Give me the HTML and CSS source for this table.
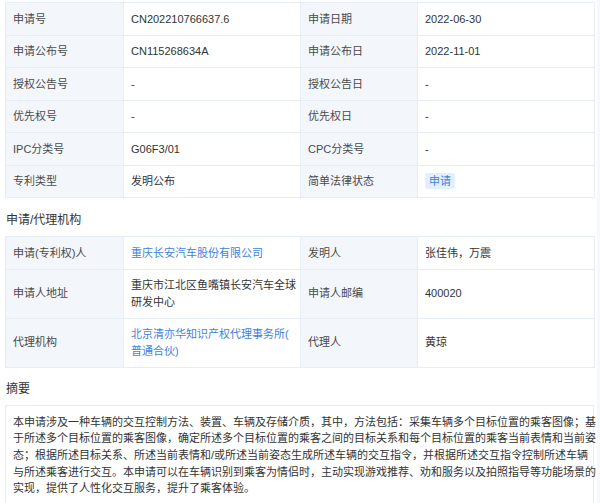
FILE: index.html
```html
<!DOCTYPE html>
<html lang="zh-CN">
<head>
<meta charset="utf-8">
<link rel="stylesheet" href="styles.css">
</head>
<body>
<div class="page">
  <table class="info">
    <colgroup><col class="c-label"><col class="c-value"><col class="c-label2"><col class="c-value"></colgroup>
    <tr><th>申请号</th><td>CN202210766637.6</td><th>申请日期</th><td>2022-06-30</td></tr>
    <tr><th>申请公布号</th><td>CN115268634A</td><th>申请公布日</th><td>2022-11-01</td></tr>
    <tr><th>授权公告号</th><td>-</td><th>授权公告日</th><td>-</td></tr>
    <tr><th>优先权号</th><td>-</td><th>优先权日</th><td>-</td></tr>
    <tr><th>IPC分类号</th><td>G06F3/01</td><th>CPC分类号</th><td>-</td></tr>
    <tr><th>专利类型</th><td>发明公布</td><th>简单法律状态</th><td><span class="tag">申请</span></td></tr>
  </table>

  <h3 class="section-title">申请/代理机构</h3>
  <table class="info">
    <colgroup><col class="c-label"><col class="c-value"><col class="c-label2"><col class="c-value"></colgroup>
    <tr><th>申请(专利权)人</th><td><a class="link">重庆长安汽车股份有限公司</a></td><th>发明人</th><td>张佳伟，万震</td></tr>
    <tr><th>申请人地址</th><td>重庆市江北区鱼嘴镇长安汽车全球研发中心</td><th>申请人邮编</th><td>400020</td></tr>
    <tr><th>代理机构</th><td><a class="link">北京清亦华知识产权代理事务所(<br>普通合伙)</a></td><th>代理人</th><td>黄琼</td></tr>
  </table>

  <h3 class="section-title abs-title">摘要</h3>
  <div class="abstract">本申请涉及一种车辆的交互控制方法、装置、车辆及存储介质，其中，方法包括：采集车辆多个目标位置的乘客图像；基<br>于所述多个目标位置的乘客图像，确定所述多个目标位置的乘客之间的目标关系和每个目标位置的乘客当前表情和当前姿<br>态；根据所述目标关系、所述当前表情和/或所述当前姿态生成所述车辆的交互指令，并根据所述交互指令控制所述车辆<br>与所述乘客进行交互。本申请可以在车辆识别到乘客为情侣时，主动实现游戏推荐、劝和服务以及拍照指导等功能场景的<br>实现，提供了人性化交互服务，提升了乘客体验。</div>
</div>
</body>
</html>
```

FILE: styles.css
```css
html {
  background: #f6f8fb;
}
body {
  margin: 0;
  font-family: "Liberation Sans", "Noto Sans CJK SC", sans-serif;
  font-size: 11px;
  color: #333;
}
.page {
  width: 597px;
  min-height: 503px;
  background: #fff;
  padding: 2px 0 0 5px;
  box-sizing: border-box;
}
.info {
  width: 589px;
  border-collapse: collapse;
  table-layout: fixed;
}
.c-label { width: 118px; }
.c-label2 { width: 117px; }
.c-value { width: 177px; }
.info th,
.info td {
  border: 1px solid #e7edf4;
  padding: 7.5px 2px 7.5px 7px;
  line-height: 16.5px;
  text-align: left;
  vertical-align: middle;
  font-weight: normal;
}
.info th {
  background: #f3f7fc;
  color: #4a4a4a;
}
.info td {
  background: #fff;
  color: #333;
}
.link {
  color: #3e83dc;
  text-decoration: none;
}
.tag {
  display: inline-block;
  background: #e4effc;
  color: #3d83dc;
  padding: 0 4px;
  line-height: 16px;
  border-radius: 2px;
}
.section-title {
  margin: 0;
  padding: 12px 0 6px 1px;
  font-size: 12px;
  line-height: 20px;
  font-weight: normal;
  color: #333;
}
.abs-title {
  padding-top: 11px;
}
.abstract {
  width: 589px;
  box-sizing: border-box;
  border: 1px solid #e7edf4;
  border-bottom: none;
  padding: 8px 4px 10px 7px;
  line-height: 16.7px;
  color: #333;
  white-space: nowrap;
}
```
